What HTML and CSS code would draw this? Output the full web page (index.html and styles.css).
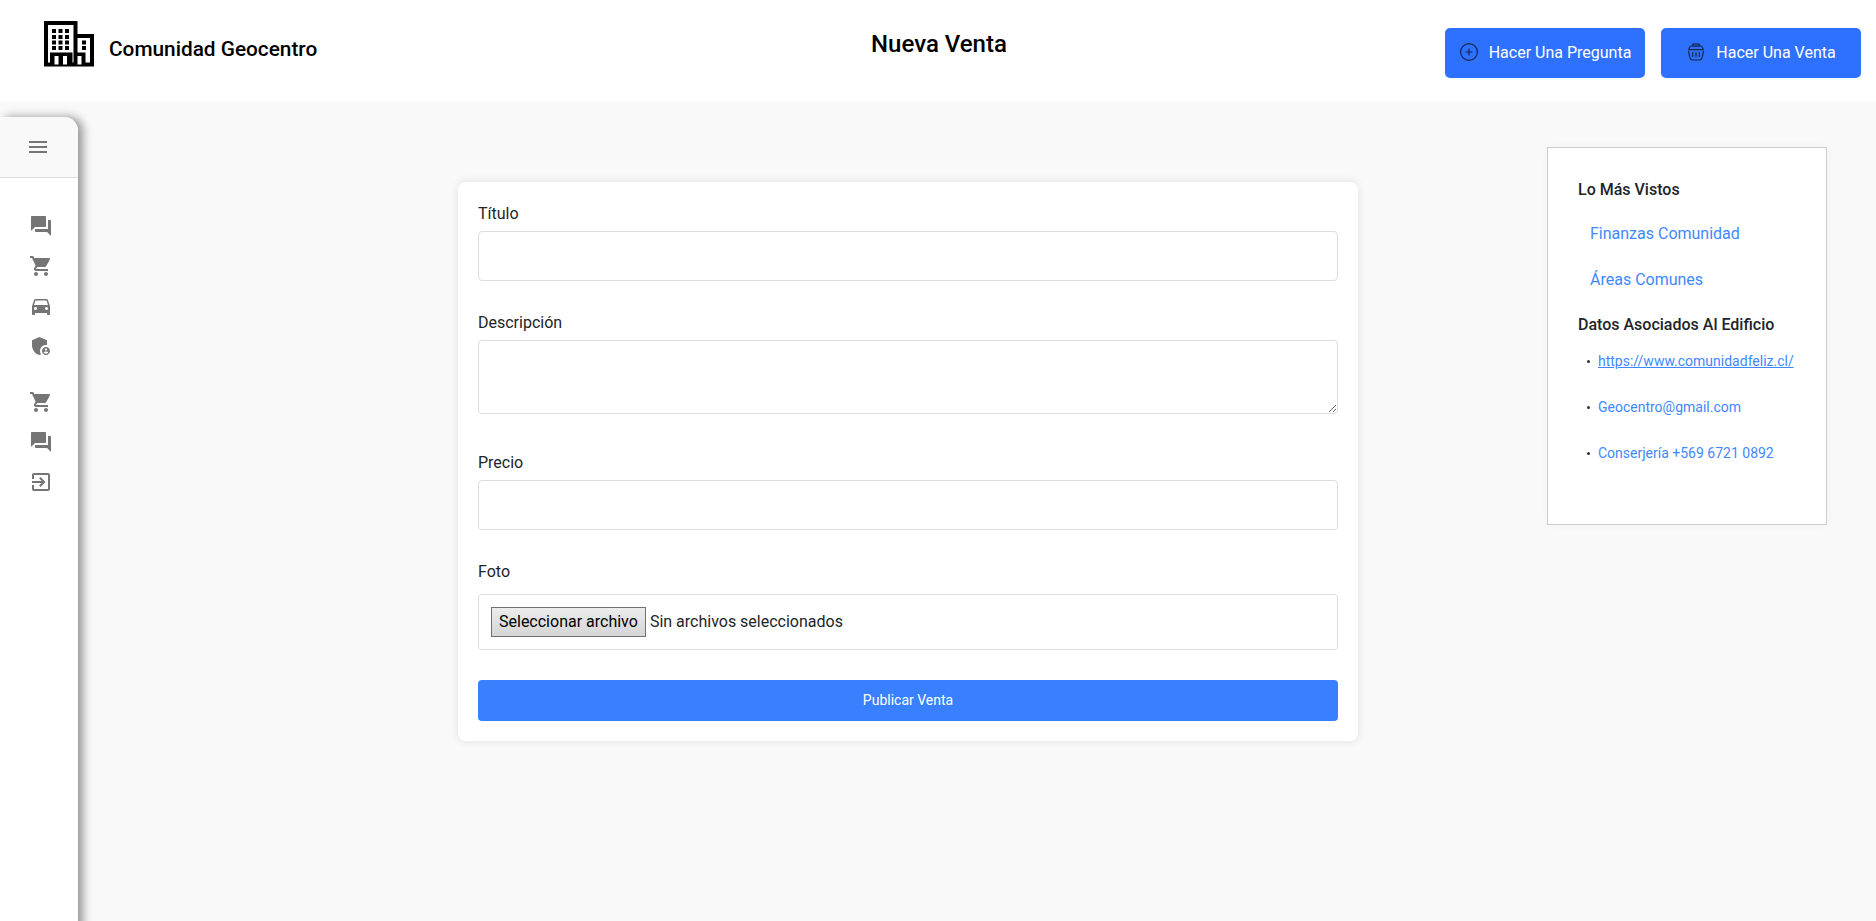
FILE: index.html
```html
<!DOCTYPE html>
<html lang="es">
<head>
<meta charset="utf-8">
<title>Nueva Venta</title>
<link rel="stylesheet" href="styles.css">
</head>
<body>
<svg class="defs" width="0" height="0" aria-hidden="true">
  <symbol id="forum" viewBox="0 0 24 24"><path d="M21 6h-2v9H6v2c0 .55.45 1 1 1h11l4 4V7c0-.55-.45-1-1-1zm-4 6V3c0-.55-.45-1-1-1H3c-.55 0-1 .45-1 1v14l4-4h10c.55 0 1-.45 1-1z"/></symbol>
  <symbol id="cart" viewBox="0 0 24 24"><path d="M7 18c-1.100 0-1.990.9-1.990 2S5.900 22 7 22s2-.9 2-2-.9-2-2-2zM1 2v2h2l3.600 7.590-1.350 2.450c-.16.280-.25.610-.25.960 0 1.100.9 2 2 2h12v-2H7.420c-.14 0-.25-.11-.25-.25l.03-.12.900-1.630h7.450c.75 0 1.410-.41 1.750-1.030l3.580-6.490c.08-.14.120-.31.120-.48 0-.55-.45-1-1-1H5.210l-.94-2H1zm16 16c-1.100 0-1.990.9-1.990 2s.89 2 1.990 2 2-.9 2-2-.9-2-2-2z"/></symbol>
  <symbol id="car" viewBox="0 0 24 24"><path d="M18.920 6.010C18.720 5.420 18.160 5 17.500 5h-11c-.66 0-1.210.42-1.420 1.010L3 12v8c0 .55.450 1 1 1h1c.55 0 1-.45 1-1v-1h12v1c0 .55.450 1 1 1h1c.55 0 1-.45 1-1v-8l-2.080-5.990zM6.500 16c-.83 0-1.500-.67-1.500-1.500S5.670 13 6.500 13s1.500.67 1.500 1.500S7.330 16 6.500 16zm11 0c-.83 0-1.500-.67-1.500-1.500s.67-1.500 1.500-1.500 1.500.67 1.500 1.500-.67 1.500-1.500 1.500zM5 11l1.500-4.500h11L19 11H5z"/></symbol>
  <symbol id="shield" viewBox="0 0 24 24"><path fill-rule="evenodd" d="M17 11c.34 0 .67.040 1 .09V6.270L10.500 3 3 6.270v4.910c0 4.540 3.200 8.790 7.500 9.820.55-.13 1.080-.32 1.600-.55-.69-.98-1.100-2.170-1.100-3.450 0-3.310 2.690-6 6-6zm0 2c-2.210 0-4 1.790-4 4s1.790 4 4 4 4-1.790 4-4-1.790-4-4-4zm0 1.380c.62 0 1.120.51 1.120 1.120s-.51 1.120-1.120 1.120-1.120-.51-1.120-1.120.5-1.120 1.120-1.120zm0 5.370c-.93 0-1.740-.46-2.240-1.170.05-.72 1.510-1.080 2.240-1.080s2.190.36 2.240 1.080c-.5.710-1.310 1.170-2.240 1.170z"/></symbol>
  <symbol id="exit" viewBox="0 0 24 24"><path d="M10.090 15.590L11.500 17l5-5-5-5-1.410 1.410L12.670 11H3v2h9.670l-2.580 2.590zM19 3H5c-1.110 0-2 .9-2 2v4h2V5h14v14H5v-4H3v4c0 1.100.89 2 2 2h14c1.100 0 2-.9 2-2V5c0-1.100-.9-2-2-2z"/></symbol>
</svg>

<header class="topbar">
  <div class="brand">
    <svg class="brand-logo" width="50" height="46" viewBox="0 0 50 46">
      <path fill-rule="evenodd" d="M0 0h33.500v13H50v32.500H0zM4 4v37.500h2V31.500h22.500V41.500H29.500V4zM33.500 17v14.500h8v10H46V17zM10.500 35v8.500h4V35zM19 35v8.500h4V35zM33.500 35v8.500h4V35z"/>
      <path d="M8 8h4v4H8zM14.500 8h4v4h-4zM21 8h4v4h-4zM8 14h4v4H8zM14.500 14h4v4h-4zM21 14h4v4h-4zM8 19.500h4v4H8zM14.500 19.500h4v4h-4zM21 19.500h4v4h-4zM8 25h4v4H8zM14.500 25h4v4h-4zM21 25h4v4h-4zM38 19.500h4v4h-4zM38 25h4v4h-4z"/>
    </svg>
    <span class="brand-name">Comunidad Geocentro</span>
  </div>
  <h1 class="page-title">Nueva Venta</h1>
  <div class="actions">
    <button class="action">
      <svg class="action-icon" width="18" height="18" viewBox="0 0 18 18"><circle cx="9" cy="9" r="8.400"/><path d="M9 6v6M6 9h6"/></svg>
      Hacer Una Pregunta
    </button>
    <button class="action">
      <svg class="action-icon" width="18" height="18" viewBox="0 0 18 18"><path d="M1.500 6.700h15M2 6.500C2 4.500 3.500 3 5.500 2.500M16 6.500C16 4.500 14.500 3 12.500 2.500M6 1.200h6v2H6zM1.500 8.500l1.600 6.500c.4 1.400 1.200 2 2.500 2h6.800c1.300 0 2.100-.6 2.500-2l1.600-6.500M5.700 9.500v4M9 9.500v4M12.300 9.500v4"/></svg>
      Hacer Una Venta
    </button>
  </div>
</header>

<main class="layout">
  <nav class="sidebar">
    <div class="sidebar-head"><svg class="menu-icon" width="18" height="12" viewBox="0 0 18 12"><path d="M0 0h18v2H0zM0 5h18v2H0zM0 10h18v2H0z"/></svg></div>
    <div class="sidebar-links">
      <svg class="nav-icon"><use href="#forum"/></svg>
      <svg class="nav-icon"><use href="#cart"/></svg>
      <svg class="nav-icon"><use href="#car"/></svg>
      <svg class="nav-icon"><use href="#shield"/></svg>
      <svg class="nav-icon nav-icon-split"><use href="#cart"/></svg>
      <svg class="nav-icon"><use href="#forum"/></svg>
      <svg class="nav-icon"><use href="#exit"/></svg>
    </div>
  </nav>

  <form class="card">
    <label class="label" for="titulo">Título</label>
    <input class="field" id="titulo" type="text">
    <label class="label" for="descripcion">Descripción</label>
    <textarea class="field field-area" id="descripcion"></textarea>
    <label class="label" for="precio">Precio</label>
    <input class="field" id="precio" type="text">
    <label class="label label-file">Foto</label>
    <div class="file"><span class="file-button">Seleccionar archivo</span><span>Sin archivos seleccionados</span></div>
    <button class="submit" type="button">Publicar Venta</button>
  </form>

  <aside class="panel">
    <h2 class="panel-title">Lo Más Vistos</h2>
    <a class="topic">Finanzas Comunidad</a>
    <a class="topic">Áreas Comunes</a>
    <h2 class="panel-title panel-title-data">Datos Asociados Al Edificio</h2>
    <ul class="contacts">
      <li class="contact"><a class="contact-link contact-url">https://www.comunidadfeliz.cl/</a></li>
      <li class="contact"><a class="contact-link">Geocentro@gmail.com</a></li>
      <li class="contact"><a class="contact-link">Conserjería +569 6721 0892</a></li>
    </ul>
  </aside>
</main>
</body>
</html>
```

FILE: styles.css
```css
* { box-sizing: border-box; }

body {
  margin: 0;
  height: 921px;
  overflow: hidden;
  display: flex;
  flex-direction: column;
  background: #f9f9f9;
  color: #212529;
  font: 16px/24px Roboto, "Liberation Sans", sans-serif;
}

h1, h2, ul { margin: 0; padding: 0; }
button { font: inherit; border: 0; }
.defs { display: none; }

/* Header */
.topbar {
  flex: none;
  height: 102px;
  display: grid;
  grid-template-columns: 1fr auto 1fr;
  align-items: start;
  padding: 0 15px 0 17px;
  background: #fff;
  color: #000;
}
.brand { display: flex; padding: 21px 0 0 27px; gap: 15px; }
.brand-name { font-size: 20.8px; font-weight: 500; line-height: 30px; padding-top: 13px; }
.page-title { font-size: 24px; font-weight: 500; line-height: 30px; padding-top: 29px; }
.actions { display: flex; justify-content: flex-end; gap: 16px; padding-top: 28px; }
.action {
  width: 200px;
  height: 50px;
  padding: 0 0 0 1px;
  display: flex;
  align-items: center;
  justify-content: center;
  gap: 11px;
  border-radius: 5px;
  background: #2f71ff;
  color: #fff;
}
.action-icon { margin-bottom: 2px; fill: none; stroke: #16254d; stroke-width: 1.2; stroke-linecap: round; stroke-linejoin: round; }

/* Body columns */
.layout { flex: 1; display: flex; align-items: flex-start; }

.sidebar {
  width: 78px;
  height: 820px;
  margin-top: 15px;
  background: #fff;
  border-radius: 0 14px 0 0;
  box-shadow: 5px 0 10px rgba(0, 0, 0, .4);
}
.sidebar-head {
  height: 61px;
  padding: 24px 0 0 29px;
  background: #f9f9f9;
  border-bottom: 1px solid #ddd;
  border-radius: 0 14px 0 0;
  line-height: 0;
}
.menu-icon { fill: #757575; }
.sidebar-links { display: flex; flex-direction: column; gap: 16px; padding: 36px 0 0 29px; }
.nav-icon { width: 24px; height: 24px; fill: #757575; }
.nav-icon-split { margin-top: 16px; }

/* Form */
.card {
  width: 900px;
  height: 559px;
  margin: 80px 0 0 380px;
  padding: 20px;
  display: flex;
  flex-direction: column;
  background: #fff;
  border-radius: 8px;
  box-shadow: 0 0 10px rgba(0, 0, 0, .1);
}
.label { height: 24px; margin-bottom: 5px; }
.label-file { margin-bottom: 10px; }
.field {
  width: 100%;
  height: 50px;
  margin: 0 0 30px;
  padding: 12px;
  border: 1px solid #dcdcdc;
  border-radius: 4px;
  background: #fff;
  font: inherit;
}
.field-area { height: 74px; margin-bottom: 37px; resize: vertical; }
.file {
  height: 56px;
  margin-bottom: 30px;
  padding: 0 12px;
  display: flex;
  align-items: center;
  gap: 4px;
  border: 1px solid #dcdcdc;
  border-radius: 4px;
}
.file-button {
  height: 30px;
  padding: 2px 7px;
  border: 1px solid #707070;
  background: linear-gradient(#ececec, #d5d5d5);
  color: #000;
}
.submit { height: 41px; padding: 0 0 1px; border-radius: 4px; background: #3880ff; color: #fff; font-size: 14px; font-weight: 400; }

/* Side panel */
.panel {
  width: 280px;
  height: 378px;
  margin: 45px 49px 0 auto;
  padding: 30px 30px 0;
  border: 1px solid #ccc;
  background: #fff;
  box-shadow: 0 0 10px rgba(0, 0, 0, .03);
}
.panel-title { font-size: 16px; font-weight: 500; line-height: 24px; margin-bottom: 20px; }
.panel-title-data { margin: -1px 0 12px; }
.topic { display: block; margin: 0 0 22px 12px; color: #3f88ff; }
.contacts { list-style: none; }
.contact {
  display: flex;
  align-items: center;
  height: 24px;
  margin-bottom: 22px;
  padding-left: 9px;
  gap: 8px;
  font-size: 14px;
}
.contact::before { content: ""; width: 3px; height: 3px; border-radius: 50%; background: #333; }
.contact-link { color: #3f88ff; }
.contact-url { text-decoration: underline; }
```
